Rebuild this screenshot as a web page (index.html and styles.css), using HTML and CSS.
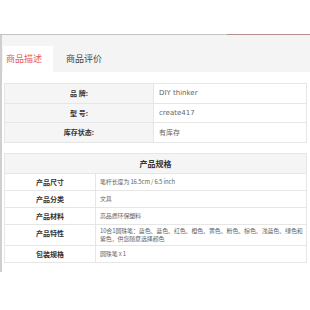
FILE: index.html
```html
<!DOCTYPE html>
<html lang="zh-CN">

<head>
    <meta charset="UTF-8" />
    <meta name="viewport" content="width=device-width, initial-scale=1.0" />
    <title>商品详情</title>
    <link rel="stylesheet" href="styles.css">
</head>

<body>
    <div class="topline">
        <span class="topline-gray"></span>
        <span class="topline-red"></span>
    </div>
    <div class="detail">
        <!-- tab bar -->
        <ul class="tabs" role="list">
            <li class="tab tab-active">商品描述</li>
            <li class="tab">商品评价</li>
        </ul>

        <table class="info">
            <tr>
                <th>品 牌:</th>
                <td>DIY thinker</td>
            </tr>
            <tr>
                <th>型 号:</th>
                <td>create417</td>
            </tr>
            <tr>
                <th>库存状态:</th>
                <td>有库存</td>
            </tr>
        </table>

        <table class="spec">
            <tr>
                <th class="spec-title" colspan="2">产品规格</th>
            </tr>
            <tr>
                <th>产品尺寸</th>
                <td>笔杆长度为 16.5cm / 6.5 inch</td>
            </tr>
            <tr>
                <th>产品分类</th>
                <td>文具</td>
            </tr>
            <tr>
                <th>产品材料</th>
                <td>高品质环保塑料</td>
            </tr>
            <tr>
                <th class="top">产品特性</th>
                <td>10合1圆珠笔：蓝色、蓝色、红色、橙色、黄色、粉色、棕色、浅蓝色、绿色和紫色，供您随意选择颜色</td>
            </tr>
            <tr>
                <th>包装规格</th>
                <td>圆珠笔 x 1</td>
            </tr>
        </table>
    </div>
</body>

</html>
```

FILE: styles.css
```css
:root {
    --color-line: #e6e6e6;
    --color-cell: #f5f5f5;
    --color-red: #e4585b;
}

* {
    box-sizing: border-box;
}

body {
    margin: 0;
    padding-top: 34px;
    font-family: "DejaVu Sans", "Noto Sans CJK SC", sans-serif;
    font-size: 7px;
    color: #666;
    background: #fff;
}

/* two-tone line above the box */
.topline {
    display: flex;
    height: 1px;
}

.topline-gray {
    flex: 0 0 227px;
    background: #c4c4c4;
}

.topline-red {
    flex: 1;
    background: #b78e8e;
}

.detail {
    border-left: 2px solid #cfcfcf;
    padding-bottom: 9px;
}

.tabs {
    display: flex;
    list-style: none;
    margin: 0;
    padding: 11px 0 0 1px;
    background: #f4f4f4;
}

.tab {
    width: 60px;
    height: 26px;
    line-height: 26px;
    padding-left: 3px;
    font-family: "Noto Sans CJK SC", sans-serif;
    font-size: 9px;
    color: #444;
}

.tab-active {
    width: 50px;
    margin-right: 10px;
    background: #fff;
    color: var(--color-red);
}

table {
    width: 303px;
    margin: 11px 0 0 2px;
    border-collapse: collapse;
}

th,
td {
    border: 1px solid var(--color-line);
    text-align: left;
    font-weight: normal;
}

th {
    background: var(--color-cell);
    color: #333;
    font-weight: bold;
    text-align: center;
    font-family: "Noto Sans CJK SC", sans-serif;
}

.info th {
    width: 149px;
    height: 19.5px;
}

.info td {
    padding-left: 5px;
}

.spec {
    margin-top: 10px;
}

.spec th {
    width: 91px;
    background: #fff;
}

.spec td {
    height: 17px;
    padding: 2px 2px 2px 4px;
    line-height: 8px;
    font-size: 6px;
    letter-spacing: -0.15px;
    font-family: "Noto Sans CJK SC", sans-serif;
}

.spec .spec-title {
    height: 20px;
    background: var(--color-cell);
    font-size: 8px;
}

.spec .top {
    vertical-align: top;
    padding-top: 3px;
}
```
